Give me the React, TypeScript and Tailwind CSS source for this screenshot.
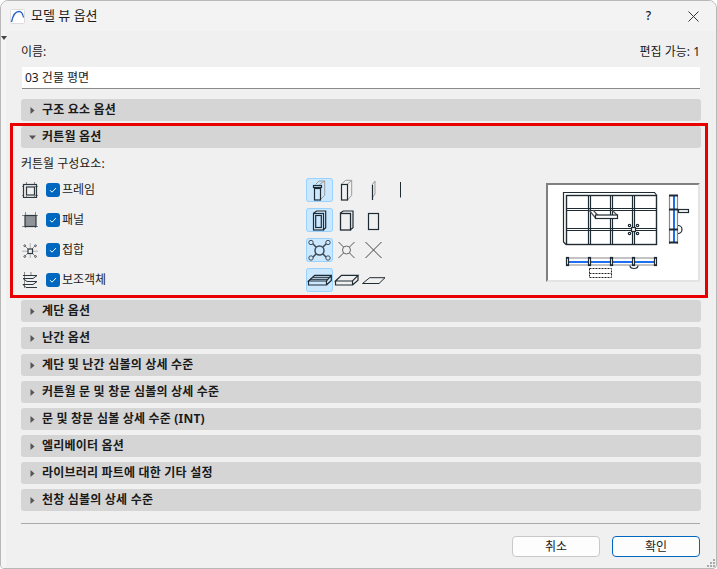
import React from 'react';

const INK = '#1f2b33';

const Caret = ({ open }: { open?: boolean }) => (
  <svg width="7" height="7" viewBox="0 0 7 7" className="shrink-0">
    {open ? <path d="M0 1.500h7L3.500 5.500z" fill="#555" /> : <path d="M1.500 0v7L5.500 3.500z" fill="#555" />}
  </svg>
);

const SectionRow = ({ label, open }: { label: string; open?: boolean }) => (
  <div className="flex items-center h-[22px] mr-[-1px] bg-[#d5d5d5] rounded-[3px] pl-[8px]">
    <Caret open={open} />
    <span className="ml-[6px] text-[12px] font-bold text-[#1a1a1a] tracking-[0.2px]">{label}</span>
  </div>
);

const Check = () => (
  <span className="flex items-center justify-center w-[14px] h-[14px] rounded-[3px] bg-[#0067c0] shrink-0">
    <svg width="10" height="10" viewBox="0 0 10 10" fill="none">
      <path d="M2 5.200l2 2L8 3" stroke="#fff" strokeWidth="1" />
    </svg>
  </span>
);

const Ico = ({ children, active }: { children: React.ReactNode; active?: boolean }) => (
  <div className={`w-[27px] h-[24px] rounded-[3px] ${active ? 'bg-[#cce8ff] outline outline-1 -outline-offset-1 outline-[#99d1ff]' : ''}`}>
    <svg width="27" height="24" viewBox="0 0 27 24" fill="none" stroke={INK} strokeWidth="1">
      {children}
    </svg>
  </div>
);

const Side = ({ children }: { children: React.ReactNode }) => (
  <svg width="16" height="16" viewBox="0 0 16 16" fill="none" stroke="#2d383f" strokeWidth="1" className="shrink-0">
    {children}
  </svg>
);

const parts = [
  {
    label: '프레임',
    side: (
      <>
        <path d="M0 4.500h2M13 4.500h3M0 13.500h2M13 13.500h3M4.500 0v2M12.500 0v2M4.500 14v2M12.500 14v2" stroke="#8a8a8a" />
        <rect x="1.500" y="2.500" width="13" height="13" strokeWidth="1.200" />
        <rect x="4.500" y="5" width="8" height="8" strokeWidth="1.200" />
      </>
    ),
    icons: [
      <>
        <path d="M9.700 6.300L13 3h5.700v14.300l-4 4M13.500 6.500L18.500 3" stroke="#9a9a9a" />
        <rect x="7.500" y="7.500" width="8" height="2" strokeWidth="1.200" />
        <rect x="8.500" y="10.500" width="6" height="11.500" strokeWidth="1.200" />
      </>,
      <>
        <path d="M8.300 6.300l4.400-4h6v15l-4.400 5M14.300 6.300l4.400-4" stroke="#9a9a9a" />
        <rect x="8.500" y="6.500" width="6" height="15.500" strokeWidth="1.200" />
      </>,
      <>
        <path d="M12 7l3-4v13l-3 4" stroke="#9a9a9a" />
        <path d="M12.500 7v15" strokeWidth="1.200" />
      </>,
      <path d="M13.500 4v15.500" />,
    ],
  },
  {
    label: '패널',
    side: (
      <>
        <path d="M0 3.500h16M0 14.500h16M3.500 0v16M13.500 0v16" stroke="#8a8a8a" />
        <rect x="3" y="3.500" width="11" height="11" fill="#8f9499" strokeWidth="1.200" />
      </>
    ),
    icons: [
      <>
        <path d="M7.500 5.300l3.200-2.300h9v16.700l-2.400 2.300" strokeWidth="1.200" />
        <rect x="7.500" y="5.500" width="10" height="16.500" strokeWidth="1.200" />
        <rect x="9.700" y="7.500" width="5.600" height="12" strokeWidth="1.200" />
      </>,
      <>
        <path d="M7 5.300l3.300-2.300H20v16.700L17 22" strokeWidth="1.200" />
        <rect x="7.500" y="5.500" width="10" height="16.500" strokeWidth="1.300" />
      </>,
      <rect x="8.500" y="5.500" width="10" height="16" strokeWidth="1.200" />,
    ],
  },
  {
    label: '접합',
    side: (
      <>
        <path d="M8.200 1v16M0 9.200h16" stroke="#b0b0b0" />
        <path d="M2.500 3.500l11 11M13.500 3.500l-11 11" stroke="#777" strokeWidth="0.800" />
        <rect x="6" y="7" width="4.500" height="4.500" fill="#f0f0f0" strokeWidth="1.200" />
        <circle cx="2.700" cy="3.700" r="0.900" fill="#f0f0f0" strokeWidth="0.800" />
        <circle cx="13.500" cy="3.700" r="0.900" fill="#f0f0f0" strokeWidth="0.800" />
        <circle cx="2.700" cy="14.500" r="0.900" fill="#f0f0f0" strokeWidth="0.800" />
        <circle cx="13.500" cy="14.500" r="0.900" fill="#f0f0f0" strokeWidth="0.800" />
      </>
    ),
    icons: [
      <g stroke="#3f4c55">
        <path d="M6 5l15 15M21 5L6 20" strokeWidth="1.500" />
        <circle cx="13.500" cy="12.500" r="4.500" fill="#cce8ff" strokeWidth="1.500" />
        <circle cx="5" cy="4.500" r="2.200" fill="#cce8ff" />
        <circle cx="22" cy="4.500" r="2.200" fill="#cce8ff" />
        <circle cx="5" cy="20" r="2.200" fill="#cce8ff" />
        <circle cx="22" cy="20" r="2.200" fill="#cce8ff" />
      </g>,
      <>
        <path d="M5.500 4l16 16M21.500 4l-16 16" stroke="#555" />
        <circle cx="13.500" cy="12" r="4" fill="#f0f0f0" stroke="#666" />
      </>,
      <path d="M5.500 4l16 16M21.500 4l-16 16" stroke="#444" />,
    ],
  },
  {
    label: '보조객체',
    side: (
      <>
        <path d="M2.500 0v16M9 0v4" stroke="#8a8a8a" />
        <path d="M1 3.500h14L11 6.500H1M1 6.500L5 9.500h10L11 12.500H1M1 12.500l3 3h11" />
      </>
    ),
    icons: [
      <>
        <path d="M2.500 13l6.200-5.700h16.600L20.500 13zM2.500 13v4h18v-4M20.500 17l4.800-4.500V7.300" strokeWidth="1.200" />
        <path d="M4 11.300h18M6.700 9.300h18" strokeWidth="1" />
      </>,
      <path d="M2.500 13l6-5.700H25L19.500 13zM2.500 13v4h17v-4M19.500 17l5.500-4.700V7.300" strokeWidth="1.200" />,
      <path d="M2.500 15.500l7.200-5.800H25l-6 5.800z" />,
    ],
  },
];

const Preview = () => (
  <div className="w-[154px] h-[99px] bg-white border-t-2 border-l-2 border-t-[#808080] border-l-[#808080] border-r-2 border-b-2 border-r-[#e4e4e4] border-b-[#e4e4e4] box-border overflow-hidden shrink-0">
    <svg width="154" height="99" viewBox="2 2 154 99" fill="none" stroke={INK} strokeWidth="1.200">
      <path d="M17.500 12V9.500h91l2 2.500M17.500 12v47l2.500 2.500" />
      <rect x="20.500" y="12.500" width="90" height="49" strokeWidth="1.400" />
      <path d="M42.500 13v48M44.500 13v48M64.500 13v48M66.500 13v48M86.500 13v48M88.500 13v48" />
      <path d="M21 25.500h89M21 27.500h89M21 45.500h89M21 47.500h89" />
      <path d="M43 27l6.500 8M47 27l5 5.500M66 27l5.500 5.500" stroke="#555" />
      <rect x="49.500" y="32" width="22" height="3.500" fill="#fff" />
      <rect x="85.500" y="44.500" width="4" height="4" fill="#fff" />
      <circle cx="83.500" cy="42.500" r="1.200" fill="#fff" />
      <circle cx="91.500" cy="42.500" r="1.200" fill="#fff" />
      <circle cx="83.500" cy="50.500" r="1.200" fill="#fff" />
      <circle cx="91.500" cy="50.500" r="1.200" fill="#fff" />
      <path d="M123.500 13v48M131.500 13v48" stroke="#888" />
      <path d="M128 13v47" stroke="#1e6ff0" strokeWidth="2" />
      {[12.500, 26.500, 46.500, 59.500].map((y) => (
        <path key={y} d="M123 0h9" transform={`translate(0 ${y})`} strokeWidth="2" />
      ))}
      <rect x="132.500" y="26.500" width="10" height="3" fill="#fff" />
      <path d="M132 42.500a4 4 0 010 8" />
      <path d="M21 75h89M21 82h89" stroke="#888" />
      <path d="M21 79h89" stroke="#1e6ff0" strokeWidth="2" />
      {[20.500, 42.500, 64.500, 86.500, 108.500].map((x) => (
        <rect key={x} x={x} y="74.500" width="2" height="8" fill="#fff" />
      ))}
      <path d="M84 82.500a4 3 0 008 0" />
      <path d="M43.500 85.500h22v9h-22zM43.500 90.500h22" strokeDasharray="2 1" stroke="#222" strokeWidth="1" />
    </svg>
  </div>
);

export default function App() {
  const rows = ['계단 옵션', '난간 옵션', '계단 및 난간 심볼의 상세 수준', '커튼월 문 및 창문 심볼의 상세 수준', '문 및 창문 심볼 상세 수준 (INT)', '엘리베이터 옵션', '라이브러리 파트에 대한 기타 설정', '천창 심볼의 상세 수준'];
  return (
    <div className="relative w-[717px] h-[569px] overflow-hidden bg-white text-[12px] text-[#1a1a1a] [font-family:'Noto_Sans','Noto_Sans_CJK_KR',sans-serif]">
      <div className="flex flex-col w-full h-full bg-[#f0f0f0] border border-[#b8b8b8] rounded-t-[8px] rounded-b-[4px] overflow-hidden">
        <header className="flex items-center h-[30px] bg-[#f3f3f3] pl-[9px] shrink-0">
          <svg width="15" height="15" viewBox="0 0 15 15" fill="none">
            <rect x="0.500" y="0.500" width="14" height="14" rx="1" fill="#fff" stroke="#ddd" />
            <path d="M1.500 13C3 6 6 2.500 9 2.500s4 3 4.500 6" stroke="#2a62c8" strokeWidth="1.300" />
          </svg>
          <span className="ml-[6px] text-[13px]">모델 뷰 옵션</span>
          <span className="ml-auto mr-[37px] text-[12px] font-medium">?</span>
          <svg width="11" height="11" viewBox="0 0 11 11" className="mr-[17px]" stroke="#333" strokeWidth="1">
            <path d="M0.500 0.500l10 10M10.500 0.500l-10 10" />
          </svg>
        </header>

        <main className="flex flex-col flex-1 border-l-[5px] border-l-[#f4f4f4] pl-[15px] pr-[16px]">
          <div className="flex justify-between items-end h-[33px] pb-[3px]">
            <span>이름:</span>
            <span>편집 가능: 1</span>
          </div>
          <div className="mt-[3px] h-[22px] ml-[1px] bg-white border-b border-[#8a8a8a] flex items-center pl-[3px]">03 건물 평면</div>

          <div className="mt-[10px] flex flex-col">
            <SectionRow label="구조 요소 옵션" />
            <div className="mt-[5px]"><SectionRow label="커튼월 옵션" open /></div>
            <div className="h-[152px] flex flex-col">
              <div className="mt-[9px] h-[14px] leading-[14px]">커튼월 구성요소:</div>
              <div className="mt-[7px] flex">
                <div className="w-[285px] flex flex-col gap-[6px]">
                  {parts.map((p) => (
                    <div key={p.label} className="flex items-center h-[24px] pl-[1px]">
                      <Side>{p.side}</Side>
                      <span className="ml-[8px]"><Check /></span>
                      <span className="ml-[2px]">{p.label}</span>
                    </div>
                  ))}
                </div>
                <div className="flex flex-col gap-[6px]">
                  {parts.map((p) => (
                    <div key={p.label} className="flex">
                      {p.icons.map((ic, j) => (
                        <Ico key={j} active={j === 0}>{ic}</Ico>
                      ))}
                    </div>
                  ))}
                </div>
                <div className="ml-auto mt-[5px]"><Preview /></div>
              </div>
            </div>
            <div className="flex flex-col gap-[5px]">
              {rows.map((r) => <SectionRow key={r} label={r} />)}
            </div>
          </div>

          <div className="mt-[12px] h-px bg-[#a9a9a9]" />
          <div className="mt-[12px] flex justify-end gap-[12px]">
            <button className="w-[88px] h-[21px] bg-[#fdfdfd] border border-[#c8c8c8] rounded-[4px]">취소</button>
            <button className="w-[88px] h-[21px] bg-[#fdfdfd] border border-[#0067c0] rounded-[4px]">확인</button>
          </div>
        </main>
      </div>

      <div className="absolute left-[10px] top-[123px] w-[698px] h-[175px] border-[3px] border-[#e80000] pointer-events-none" />
      <svg width="6" height="4" viewBox="0 0 6 4" className="absolute left-[1px] top-[36px]"><path d="M0 0h6L3 4z" fill="#444" /></svg>
      <svg width="9" height="9" viewBox="0 0 9 9" className="absolute right-[1px] bottom-[1px]" fill="#aaa">
        <rect x="6" y="0" width="2" height="2" /><rect x="3" y="3" width="2" height="2" /><rect x="6" y="3" width="2" height="2" />
        <rect x="0" y="6" width="2" height="2" /><rect x="3" y="6" width="2" height="2" /><rect x="6" y="6" width="2" height="2" />
      </svg>
    </div>
  );
}
